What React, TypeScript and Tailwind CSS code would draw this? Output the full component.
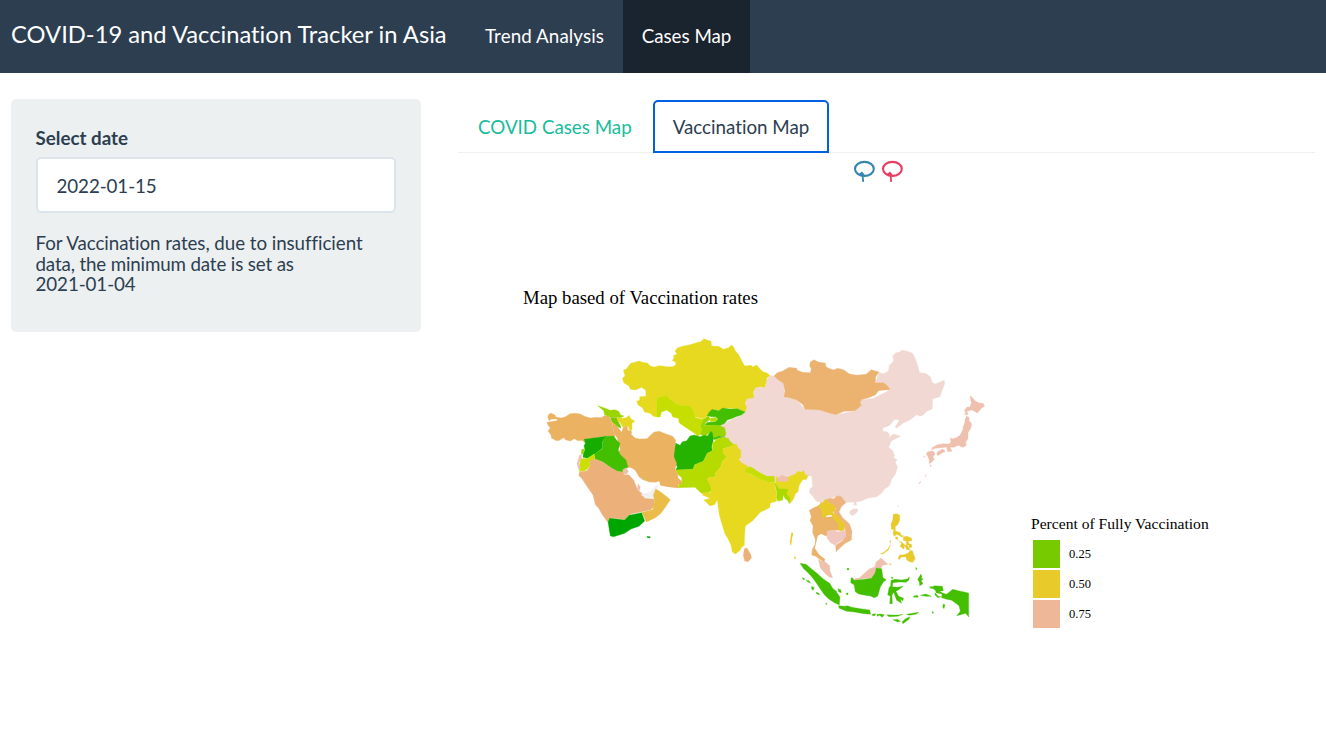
import React from "react";

type Region = { d: string; fill: string };
type Sheet = { x: number; y: number; regions: Region[] };

const DARK_GREEN = "#00a600";
const GREEN = "#43bf00";
const LIME = "#b6db00";
const YELLOW = "#e6d91f";
const GOLD = "#e8ca2b";
const ORANGE = "#ebb261";
const SAND = "#ecb176";
const ROSE = "#efc0ae";
const PINK = "#f1d8d3";

// Each sheet holds outlines in third-of-a-unit steps from its own origin.
const sheets: Sheet[] = [
  {
    x: 760,
    y: 340,
    regions: [
      { fill: PINK, d: "M30 107L42 108L54 119L70 130L75 170L110 180L135 208L180 210L228 224L285 212L303 180L340 175L390 150L370 128L346 130L357 97L371 101L385 93L388 76L401 64L398 48L407 38L418 37L426 31L441 33L458 40L466 56L472 72L479 98L497 100L511 110L517 128L527 132L541 125L553 121L554 131L547 150L540 170L530 173L518 177L517 207L500 214L490 225L480 229L470 224L450 240L430 249L410 265L405 260L411 252L418 240L405 238L390 255L380 260L369 263L368 273L382 276L389 284L385 293L401 282L422 289L410 295L394 303L386 322L398 332L404 347L400 351L412 361L405 366L413 380L407 401L395 418L388 438L374 447L363 461L350 470L325 474L305 483L288 486L290 496L281 495L283 487L258 487L232 468L195 480L184 488L168 483L158 468L148 458L150 446L158 440L155 408L140 408L110 430L40 422L-45 396L-62 370L-60 340L-75 315L-90 308L-112 290L-112 265L-125 261L-115 253L-100 246L-78 236L-60 228L-45 218L-42 175L-30 173L-20 170L-15 142L15 142L20 120Z" },
      { fill: PINK, d: "M270 513L278 507L292 506L294 513L286 522L275 527L269 520Z" },
      { fill: "#ecb270", d: "M42 108L52 98L70 92L87 82L110 85L112 91L128 97L151 98L154 87L149 78L151 66L162 59L177 67L196 69L198 80L206 85L221 90L233 85L252 90L267 101L290 106L318 103L334 89L357 96L347 111L346 129L370 128L382 137L390 149L372 150L356 152L346 165L326 173L304 179L300 187L304 196L285 212L252 214L228 224L205 218L180 210L135 208L129 194L110 180L91 174L72 170L75 154L70 130L54 119Z" },
      { fill: ROSE, d: "M630 168L636 171L645 182L658 189L669 190L674 198L665 204L652 219L636 210L620 214L625 222L614 226L617 217L613 212L621 201L630 201L634 188Z" },
      { fill: ROSE, d: "M620 228L628 233L627 242L635 251L633 263L624 278L624 296L617 306L619 315L611 322L602 320L596 316L582 322L570 322L576 334L563 335L560 321L545 323L526 325L514 330L518 322L532 314L550 311L567 312L573 305L570 294L578 296L589 293L600 286L608 270L610 259L615 247L615 238Z" },
      { fill: ROSE, d: "M502 336L509 334L520 333L525 342L519 351L523 358L516 366L507 371L508 360L503 348L499 343Z M533 335L548 327L556 334L545 340L533 347L530 341Z M490 347L497 352L492 350Z M510 374L515 377L511 380Z M483 424L479 431L477 429Z M499 401L498 407L495 411Z" },
    ],
  },
  {
    x: 610,
    y: 330,
    regions: [
      { fill: YELLOW, d: "M40 120L49 117L62 100L77 96L87 93L98 97L112 99L122 109L134 111L146 107L158 108L171 110L188 110L198 104L196 95L187 92L192 83L190 77L201 72L195 63L202 54L220 48L240 44L256 39L272 35L282 26L297 32L303 33L305 48L325 49L341 58L355 53L365 45L371 52L376 62L386 74L395 92L404 108L424 106L427 111L440 105L451 118L460 126L472 129L480 137L471 143L468 158L464 172L452 170L437 172L430 186L431 203L410 206L405 220L410 233L405 245L382 236L349 234L333 242L306 238L298 253L280 266L257 261L250 239L239 227L204 225L179 207L169 199L140 204L140 261L130 259L120 250L103 246L98 234L84 225L80 213L89 211L89 200L108 199L107 181L95 172L77 180L61 178L57 168L42 159L37 145L45 138Z" },
      { fill: "#c6df00", d: "M140 204L169 197L179 207L204 225L239 227L250 239L257 263L277 268L295 259L300 265L279 277L269 289L276 296L271 313L262 319L256 311L240 301L225 291L208 279L205 265L188 261L184 250L170 241L154 246L151 261L140 261Z" },
      { fill: "#43bf00", d: "M298 246L306 238L326 242L338 234L360 237L382 236L406 246L394 255L378 260L368 265L352 270L344 280L329 287L310 286L284 285L293 277L315 276L324 267L317 260L304 260L291 257Z" },
      { fill: LIME, d: "M302 265L316 262L324 269L313 276L300 274Z" },
      { fill: "#9bd500", d: "M281 270L293 258L301 268L289 277L283 286L314 285L332 288L344 293L348 312L344 319L326 318L309 325L306 307L297 310L283 320L271 313L276 296L270 289Z" },
      { fill: "#43bf00", d: "M309 324L327 318L346 321L325 325L313 329Z" },
    ],
  },
  {
    x: 660,
    y: 420,
    regions: [
      { fill: "#26b300", d: "M47 69L60 76L67 65L80 62L90 48L103 45L120 50L134 46L142 48L153 34L158 40L160 61L155 80L157 92L142 100L130 124L104 134L99 148L47 150L52 140L42 125L40 89Z" },
      { fill: LIME, d: "M47 150L99 148L104 134L130 124L142 100L157 92L158 70L171 57L188 52L205 55L210 64L222 74L207 81L189 86L190 99L200 111L187 125L182 142L166 160L168 169L141 176L149 189L156 211L145 218L124 220L105 202L54 203L57 192L67 187L64 172L55 165Z" },
      { fill: YELLOW, d: "M188 86L207 82L222 72L230 73L234 84L242 90L242 112L237 118L243 127L263 139L255 157L275 165L294 175L333 188L346 189L350 168L355 177L381 180L383 172L408 161L413 154L425 157L431 151L435 163L444 168L440 178L428 179L418 195L414 215L406 221L401 236L390 251L386 234L372 223L383 209L361 206L343 192L348 213L350 244L331 249L329 263L301 277L278 302L256 318L254 342L253 376L246 381L239 392L226 402L217 396L213 376L203 354L195 342L184 306L178 285L174 256L172 239L163 254L150 258L136 244L131 240L151 235L127 225L130 218L149 218L155 211L149 192L141 178L146 171L168 171L166 159L182 142L187 127L200 111L190 100Z" },
      { fill: "#c6df00", d: "M255 157L259 144L271 140L282 146L292 154L320 169L343 169L344 188L328 187L294 175L273 163Z" },
      { fill: "#aada00", d: "M344 190L352 199L360 206L385 208L379 220L390 236L388 251L382 240L375 236L370 224L368 240L354 244L350 235L350 215Z" },
      { fill: ROSE, d: "M350 182L358 170L368 166L384 173L385 183L366 185Z" },
      { fill: SAND, d: "M253 386L261 384L273 405L274 415L264 425L254 423L250 406Z" },
      { fill: YELLOW, d: "M395 340L399 342L394 359L393 376L390 366L393 352Z M404 410L408 415L404 416Z" },
    ],
  },
  {
    x: 540,
    y: 380,
    regions: [
      { fill: ORANGE, d: "M23 108L31 99L45 105L47 111L63 114L77 110L90 101L107 100L121 102L133 109L151 114L168 112L184 113L193 107L207 108L213 120L218 139L221 155L226 169L196 169L155 175L133 178L134 188L126 181L113 182L103 176L91 183L78 180L70 173L59 181L49 182L34 174L33 165L24 153L31 143L24 136L21 127L51 122L52 117L35 117L27 122Z" },
      { fill: "#9bd500", d: "M173 77L194 84L210 91L225 89L236 94L242 105L252 108L242 113L211 111L194 105L191 92Z" },
      { fill: "#78ca00", d: "M211 112L230 113L234 124L242 137L242 145L231 139L216 126Z" },
      { fill: "#e8d722", d: "M230 111L248 115L260 113L267 106L273 117L285 124L276 130L276 149L270 154L264 137L249 142L242 130L234 123Z" },
      { fill: ORANGE, d: "M216 127L231 139L245 157L250 142L262 138L263 150L276 155L273 163L285 174L298 177L321 176L332 165L343 156L358 154L376 161L398 169L407 181L405 202L401 229L410 251L405 267L413 282L414 294L425 303L427 310L414 313L414 324L382 320L361 316L358 303L347 307L328 306L309 299L297 290L286 271L271 262L263 263L257 246L241 227L237 216L241 206L232 175L222 158Z" },
      { fill: "#16ac00", d: "M132 178L154 175L189 170L198 168L188 184L187 205L168 219L142 235L129 232L130 219L135 210L132 197L136 190Z" },
      { fill: GREEN, d: "M190 178L198 169L221 168L229 179L240 190L235 211L241 224L258 240L264 262L252 267L248 276L230 274L213 263L188 246L165 237L163 222L187 206Z" },
      { fill: "#9bd500", d: "M125 208L134 207L130 220L124 224Z" },
      { fill: "#cbe000", d: "M121 235L142 236L162 222L164 237L148 245L151 256L142 267L134 272L118 275Z" },
      { fill: ROSE, d: "M119 225L125 225L123 241L117 247L121 260L117 270L111 251Z M248 269L259 264L265 274L260 283L251 281Z M295 311L301 320L298 333L292 326Z" },
      { fill: "#ecb17a", d: "M165 237L188 246L213 263L235 275L250 276L252 284L267 285L281 300L293 330L308 342L314 355L342 357L344 376L333 389L305 395L275 401L264 407L255 419L236 416L210 415L203 426L186 403L176 385L166 374L159 345L144 324L126 296L116 286L119 276L141 272L151 256L148 244Z" },
      { fill: "#f1f1f1", d: "M303 344L332 335L351 313L354 321L344 337L339 355L315 352Z" },
      { fill: "#e9bd48", d: "M347 327L358 333L370 342L391 359L376 382L363 400L345 414L319 426L306 397L338 389L344 367L340 346Z" },
      { fill: DARK_GREEN, d: "M209 415L236 418L254 420L267 406L305 398L314 423L297 439L273 447L254 460L221 470L211 468L204 426Z M321 469L331 470L330 474L322 473Z" },
    ],
  },
  {
    x: 780,
    y: 490,
    regions: [
      { fill: "#ebb26a", d: "M88 61L100 54L117 46L125 36L138 82L165 79L174 95L188 120L165 121L145 122L139 139L124 131L113 137L108 158L104 175L118 195L135 208L132 216L119 208L107 199L95 195L97 178L105 163L106 148L98 128L99 108L90 91L94 80Z" },
      { fill: "#edb47f", d: "M136 30L150 25L161 26L171 17L184 20L198 38L185 49L177 66L188 83L208 101L216 124L214 150L194 161L179 175L168 186L167 166L188 152L197 136L195 111L177 91L161 66L168 55L152 42L145 39Z" },
      { fill: GOLD, d: "M117 47L127 38L135 29L142 29L146 40L159 42L167 52L165 63L157 66L174 79L195 103L193 121L180 123L175 116L176 101L160 87L155 75L144 75L127 85L125 63Z" },
      { fill: "#f0c8bf", d: "M141 124L156 121L175 125L194 122L198 140L187 151L177 156L165 166L150 157L141 143Z" },
      { fill: ROSE, d: "M115 208L123 213L136 216L149 227L150 242L158 263L148 262L135 250L121 233Z M222 267L229 265L238 264L255 248L269 236L284 231L288 217L303 204L313 213L324 223L308 226L302 237L289 235L285 249L272 265L247 266L237 269L225 270Z" },
      { fill: GREEN, d: "M60 220L78 223L95 237L109 248L130 267L149 280L157 293L172 310L180 321L178 345L165 339L147 328L133 314L123 300L113 285L101 268L88 252L71 236Z" },
      { fill: GREEN, d: "M213 263L219 265L222 271L240 269L254 268L274 265L285 249L289 234L305 236L309 263L319 269L310 276L301 291L296 309L293 319L282 323L271 318L255 316L236 312L226 305L222 284L212 278Z" },
      { fill: GREEN, d: "M333 271L345 268L365 270L382 267L388 261L387 270L378 277L358 276L339 278L337 290L351 292L370 289L355 300L348 304L356 319L371 325L368 333L361 326L365 340L350 331L341 307L336 316L337 341L329 341L331 318L323 315L327 293L332 287Z" },
      { fill: GREEN, d: "M449 294L464 287L487 289L490 302L478 304L488 309L500 313L518 298L535 302L566 309L566 381L557 370L542 374L530 377L541 364L537 347L515 331L500 328L485 323L486 312L468 308L467 302L460 296Z" },
      { fill: GREEN, d: "M175 347L194 349L203 347L215 352L242 356L269 360L272 373L252 371L223 366L200 364L178 355Z M276 373L287 371L285 377L278 377Z M291 373L302 372L313 374L307 382L298 376L291 379Z M320 374L337 375L353 375L370 373L352 379L327 380Z M379 373L397 370L417 367L408 373L388 376Z M339 389L352 388L362 394L352 396Z M366 396L376 386L390 380L387 388L376 396L369 401Z" },
      { fill: GREEN, d: "M416 263L423 252L426 262L422 264L430 267L423 272L429 281L419 287L418 276L413 269Z M400 318L412 316L415 322L403 322Z M421 316L438 312L454 319L437 319Z M465 308L475 319L484 320L474 323L465 315Z M490 342L495 344L492 356L488 351Z M407 232L411 236L408 240Z M456 364L461 367L458 371Z" },
      { fill: GREEN, d: "M174 296L182 299L184 308L176 305Z M197 312L204 308L204 315Z M201 235L207 235L206 240L202 240Z M67 263L75 267L70 270Z M78 270L87 272L92 280L84 276Z M95 289L103 293L99 301L95 297Z M108 307L116 309L119 315L110 312Z M136 340L142 341L139 344Z M162 299L170 304L167 309Z M340 262L336 267L334 261Z M448 290L457 290L452 293Z" },
      { fill: GOLD, d: "M340 73L348 71L359 75L359 91L353 104L346 109L346 122L362 129L362 135L370 137L366 142L351 133L342 139L339 129L342 120L334 117L333 101L338 91Z M347 140L354 142L353 149L346 145Z M301 192L313 186L323 177L332 164L325 180L309 192Z M356 152L366 157L374 164L372 178L360 169L365 160Z M370 140L382 139L395 145L395 153L384 153L389 166L379 164L379 154L370 151Z M386 161L394 162L396 171L388 174Z M374 165L382 166L390 180L380 179Z M354 204L359 195L372 194L385 189L391 181L398 183L401 194L406 205L399 217L391 216L381 211L377 200L364 201L358 209Z M328 221L335 222L331 225Z" },
      { fill: GOLD, d: "M35 128L39 130L35 143L34 157L31 164L33 143Z M44 200L48 204L44 205Z M332 150L331 160L329 154Z" },
      { fill: PINK, d: "M353 46L356 48L354 51Z" },
    ],
  },
];

const legend = [
  { label: "0.25", swatch: "bg-[#78ca00]" },
  { label: "0.50", swatch: "bg-[#e8ca2b]" },
  { label: "0.75", swatch: "bg-[#edb798]" },
];

function AsiaMap() {
  return (
    <svg className="block h-[300px] w-[460px] shrink-0" viewBox="540 330 460 300" role="img">
      {sheets.map((sheet) => (
        <g
          key={`${sheet.x}-${sheet.y}`}
          transform={`translate(${sheet.x} ${sheet.y}) scale(0.33333)`}
          strokeOpacity="0.6"
          strokeWidth="1.5"
          strokeLinejoin="round"
        >
          {sheet.regions.map((region, i) => (
            <path key={i} d={region.d} fill={region.fill} stroke={region.fill} />
          ))}
        </g>
      ))}
    </svg>
  );
}

function Lasso({ color }: { color: string }) {
  return (
    <svg className="h-[22px] w-[22px]" viewBox="0 0 22 22" fill="none" stroke={color}>
      <ellipse cx="11.4" cy="8.9" rx="9.4" ry="7" strokeWidth="2.1" />
      <path d="M6.5 14.2L9.6 15.5L10.2 21.8" strokeWidth="1.8" />
      <path d="M6.4 15L8.8 12.8L10.8 15.2" strokeWidth="1.8" />
    </svg>
  );
}

export default function App() {
  return (
    <div className="min-h-[745px] bg-white font-['Lato',sans-serif] text-[18.75px] text-[#2c3e50] [font-variant-ligatures:none]">
      <nav className="flex h-[73px] items-center bg-[#2c3e50] text-white">
        <div className="w-[466px] pb-[6px] pl-[11px] text-[23.75px] leading-[24px] whitespace-nowrap">
          COVID-19 and Vaccination Tracker in Asia
        </div>
        <a className="flex h-full w-[157px] items-center justify-center tracking-[0.1px]">Trend Analysis</a>
        <a className="flex h-full w-[127px] items-center justify-center">
          <span className="flex h-full w-full items-center justify-center bg-[#1a242f]">Cases Map</span>
        </a>
      </nav>

      <div className="flex pt-[26px] pl-[11px]">
        <aside className="h-[233px] w-[410px] rounded-[5px] bg-[#ecf0f1] px-[25px] pt-[25px]">
          <label className="-ml-[0.5px] block leading-[27px] font-bold">Select date</label>
          <div className="mt-[6px] flex h-[56px] w-[360px] items-center rounded-[5px] border-2 border-[#dce4ec] bg-white px-[18.5px] pt-[2px] tracking-[-0.08px]">
            2022-01-15
          </div>
          <p className="mt-[20px] -ml-[0.5px] leading-[20.6px] whitespace-nowrap">
            <span className="tracking-[-0.06px]">For Vaccination rates, due to insufficient</span>
            <br />
            <span className="tracking-[-0.15px]">data, the minimum date is set as</span>
            <br />
            <span className="tracking-[-0.08px]">2021-01-04</span>
          </p>
        </aside>

        <main className="ml-[37px] w-[857px]">
          <div className="flex h-[54px] items-end border-b border-[#ecf0f1]">
            <a className="flex h-[53px] w-[195px] items-center pt-[3px] pl-5 text-[#18bc9c]">COVID Cases Map</a>
            <a className="-mb-px flex h-[53px] w-[176px] items-center justify-center rounded-t-[5px] border-2 border-[#0060df] bg-white pt-[2px]">
              Vaccination Map
            </a>
          </div>
          <div className="flex h-[135px] gap-[6px] pt-[7px] pl-[395px]">
            <Lasso color="#3386af" />
            <Lasso color="#e83e62" />
          </div>
          <section className="font-['Liberation_Serif',serif] text-black">
            <h2 className="h-[42px] pl-[65px] text-[18.75px] leading-[20px]">Map based of Vaccination rates</h2>
            <div className="flex pl-[82px]">
              <AsiaMap />
              <div className="ml-[32.5px] pt-[184px]">
                <div className="-ml-[1.5px] h-[25px] text-[15.6px] leading-[20px] whitespace-nowrap">
                  Percent of Fully Vaccination
                </div>
                <div className="flex flex-col">
                  {legend.map((item) => (
                    <div key={item.label} className="flex h-[30px] items-center text-[12.5px]">
                      <span className={`mr-[9px] h-7 w-[27.5px] ${item.swatch}`} />
                      {item.label}
                    </div>
                  ))}
                </div>
              </div>
            </div>
          </section>
        </main>
      </div>
    </div>
  );
}
